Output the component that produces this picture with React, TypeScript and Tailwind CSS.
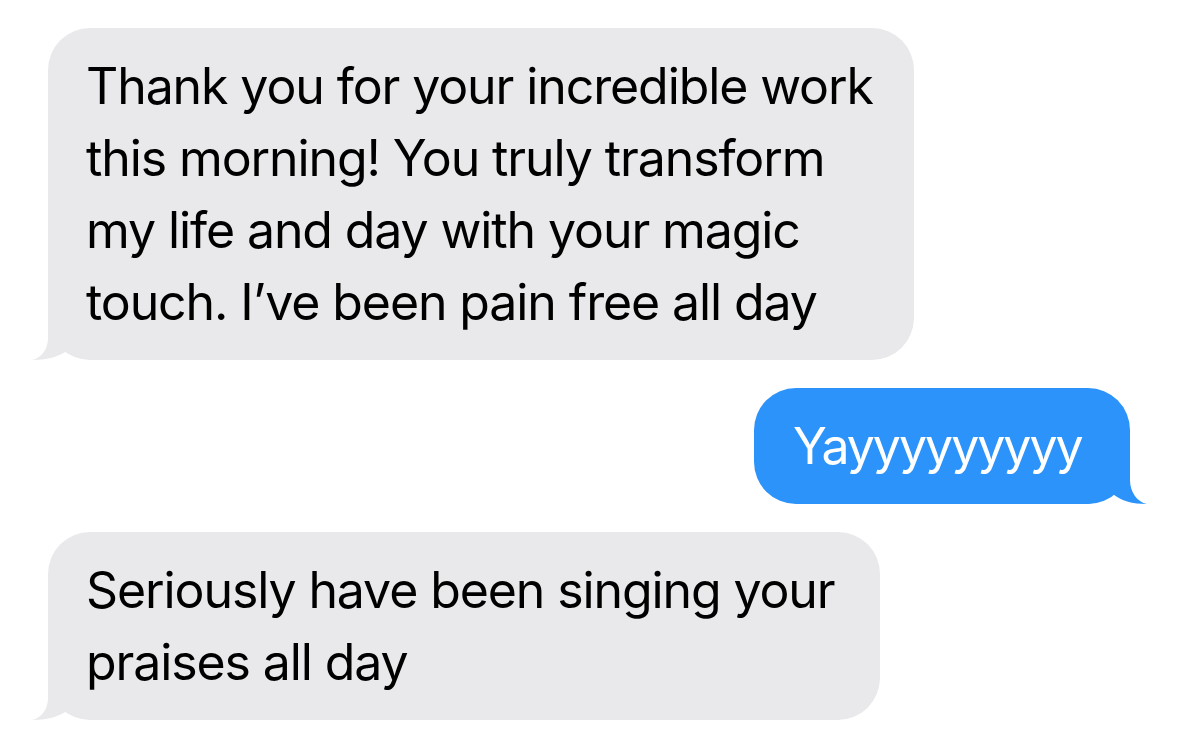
const gray = '#e9e9eb';
const blue = '#2b93fa';

function TailLeft({ color }: { color: string }) {
    return (
        <svg className="absolute bottom-0 left-[-16px]" width="72" height="50" viewBox="0 0 72 50">
            <path
                d="M16 0 L16 28 C16 40 9 48 0 50 C14 50 27 47 36 40 C44 46 52 50 64 50 L72 50 L72 0 Z"
                fill={color}
            />
        </svg>
    );
}

function TailRight({ color }: { color: string }) {
    return (
        <svg className="absolute bottom-0 right-[-17px]" width="72" height="50" viewBox="0 0 72 50">
            <path
                d="M55 0 L55 26 C55 38 62 48 72 50 C58 50 45 47 37 39 C29 46 20 50 8 50 L0 50 L0 0 Z"
                fill={color}
            />
        </svg>
    );
}

function Line({ children }: { children: string }) {
    return <div className="whitespace-nowrap">{children}</div>;
}

export default function App() {
    return (
        <div
            className="w-[1179px] h-[755px] bg-white overflow-hidden flex flex-col gap-[28px] pt-[28px] text-[50px] leading-[72px] tracking-[-1.1px]"
            style={{ fontFamily: 'Inter, "Noto Sans", sans-serif' }}
        >
            <div className="relative ml-[48px] w-[866px] rounded-[42px] bg-[#e9e9eb] pl-[38px] py-[22px] text-black">
                <TailLeft color={gray} />
                <div className="relative">
                    <Line>Thank you for your incredible work</Line>
                    <Line>this morning! You truly transform</Line>
                    <Line>my life and day with your magic</Line>
                    <Line>touch. I’ve been pain free all day</Line>
                </div>
            </div>

            <div className="relative ml-[754px] w-[376px] rounded-[42px] bg-[#2b93fa] pl-[39px] py-[22px] text-white tracking-[-2px]">
                <TailRight color={blue} />
                <div className="relative">
                    <Line>Yayyyyyyyyy</Line>
                </div>
            </div>

            <div className="relative ml-[48px] w-[832px] rounded-[42px] bg-[#e9e9eb] pl-[38px] py-[22px] text-black">
                <TailLeft color={gray} />
                <div className="relative">
                    <Line>Seriously have been singing your</Line>
                    <Line>praises all day</Line>
                </div>
            </div>
        </div>
    );
}
